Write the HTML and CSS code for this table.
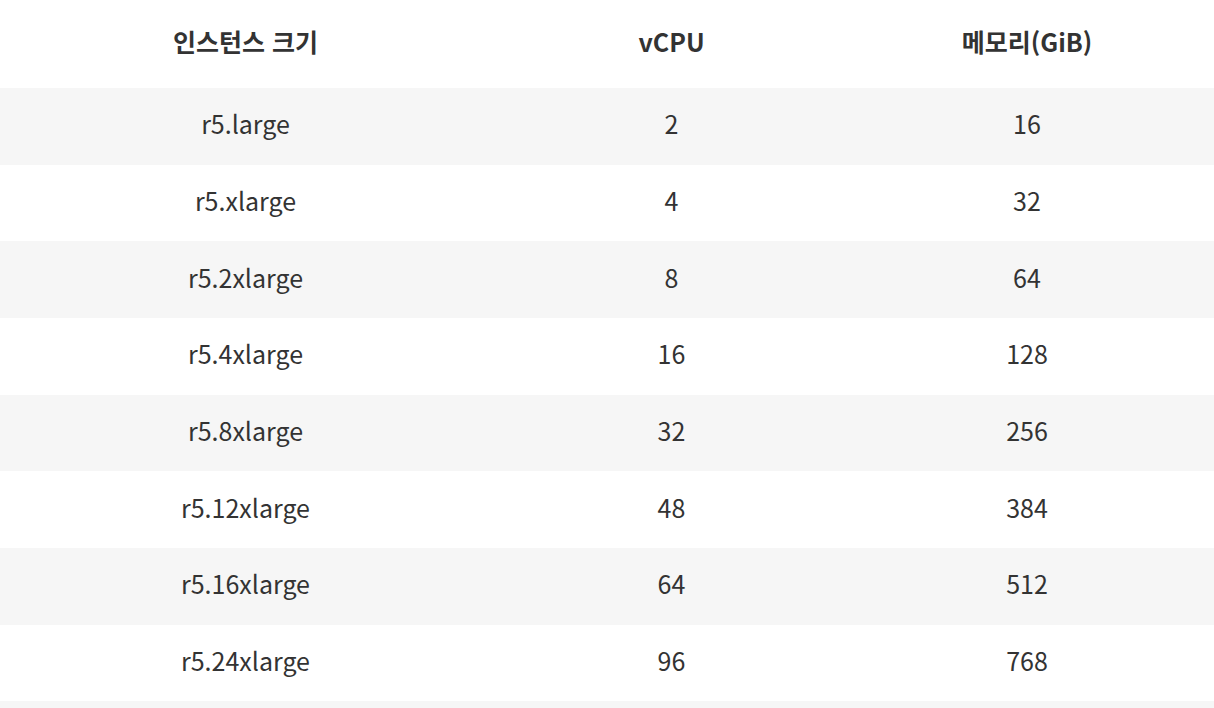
FILE: index.html
```html
<!DOCTYPE html>
<html lang="ko">
<head>
<meta charset="utf-8">
<link rel="stylesheet" href="styles.css">
</head>
<body>
<table class="spec">
  <colgroup>
    <col class="c1"><col class="c2"><col class="c3">
  </colgroup>
  <thead>
    <tr><th>인스턴스 크기</th><th>vCPU</th><th class="last">메모리(GiB)</th></tr>
  </thead>
  <tbody>
    <tr><td>r5.large</td><td>2</td><td class="last">16</td></tr>
    <tr><td>r5.xlarge</td><td>4</td><td class="last">32</td></tr>
    <tr><td>r5.2xlarge</td><td>8</td><td class="last">64</td></tr>
    <tr><td>r5.4xlarge</td><td>16</td><td class="last">128</td></tr>
    <tr><td>r5.8xlarge</td><td>32</td><td class="last">256</td></tr>
    <tr><td>r5.12xlarge</td><td>48</td><td class="last">384</td></tr>
    <tr><td>r5.16xlarge</td><td>64</td><td class="last">512</td></tr>
    <tr><td>r5.24xlarge</td><td>96</td><td class="last">768</td></tr>
    <tr class="tail"><td></td><td></td><td class="last"></td></tr>
  </tbody>
</table>
</body>
</html>
```
FILE: styles.css
```css
html, body {
  margin: 0;
  padding: 0;
  background: #ffffff;
}
body {
  font-family: "Noto Sans CJK KR", "Noto Sans", sans-serif;
  color: #333333;
  overflow: hidden;
}
.spec {
  width: 1214px;
  border-collapse: collapse;
  table-layout: fixed;
}
.c1 { width: 491px; }
.c2 { width: 361px; }
.c3 { width: 362px; }
.spec th, .spec td {
  padding: 0;
  text-align: center;
  vertical-align: middle;
}
.spec th {
  height: 82px;
  padding-bottom: 6px;
  font-size: 25px;
  font-weight: 700;
}
.spec td {
  height: 70.67px;
  padding-bottom: 6px;
  font-size: 25px;
  font-weight: 400;
}
.spec .last {
  padding-right: 12px;
}
.spec tbody tr:nth-child(odd) {
  background: #f6f6f6;
}
```
